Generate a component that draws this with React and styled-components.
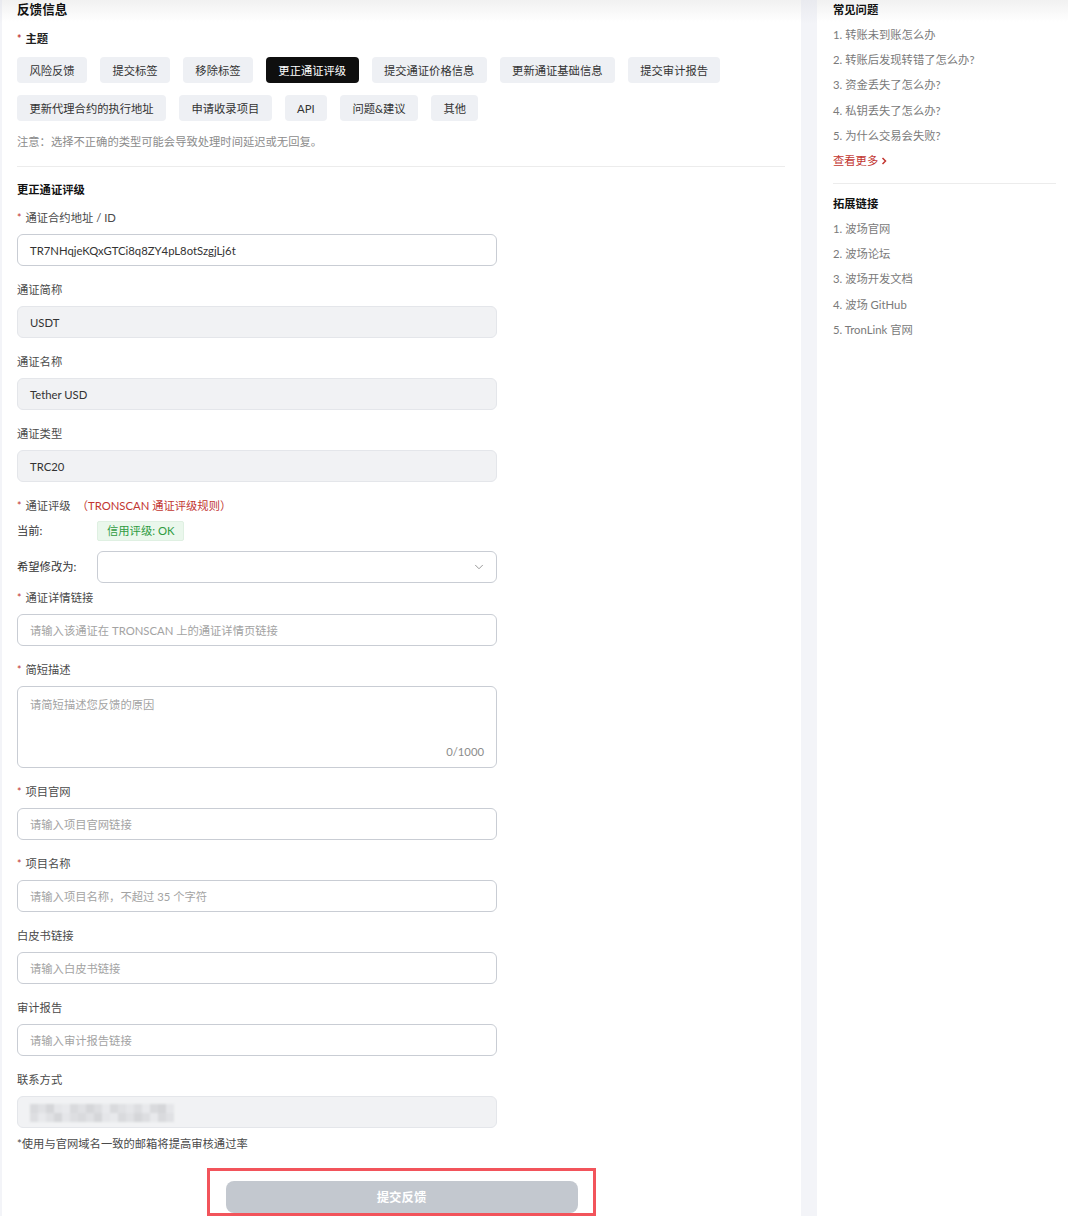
import React from 'react';
import styled, {createGlobalStyle} from 'styled-components';
import {ChevronDown} from 'lucide-react';

const GlobalStyle = createGlobalStyle`
  * { box-sizing: border-box; }
  body {
    margin: 0;
    background: #f3f4f8;
    font-family: "Lato", "Noto Sans CJK SC", sans-serif;
    font-size: 11.3px;
    color: #333;
    -webkit-font-smoothing: antialiased;
  }
`

const Page = styled.div`
  display: flex;
  gap: 16px;
  padding-left: 2px;
  min-height: 1216px;
  background: linear-gradient(#e9eaef 0, #f3f4f8 24px);
`

const Main = styled.main`
  width: 799px;
  padding: 0 16px 24px 15px;
  background: linear-gradient(#f1f1f1 0, #fff 22px);
`

const Side = styled.aside`
  flex: 1;
  padding: 0 12px 0 16px;
  background: linear-gradient(#f1f1f1 0, #fff 22px);
`

const Title = styled.h2`
  margin: 0;
  font-size: 12.6px;
  line-height: 20px;
  font-weight: 700;
  color: #111;
`

const SubTitle = styled(Title)`
  font-size: 11.3px;
  margin-top: ${p => p.$top || 0}px;
`

const Star = styled.span`
  color: #c23631;
  font-size: 10.5px;
  margin-right: 4px;
`

const Label = styled.div`
  line-height: 20px;
  color: ${p => p.$strong ? '#222' : '#4a4a4a'};
  font-weight: ${p => p.$strong ? 700 : 400};
  margin-top: ${p => p.$top || 0}px;
  margin-bottom: ${p => p.$bottom ?? 6}px;
`

const RuleLink = styled.span`
  color: #c23631;
  margin-left: 6px;
`

const Tags = styled.div`
  display: flex;
  flex-wrap: wrap;
  gap: 12px 13px;
  margin-top: 8px;
`

const Tag = styled.button`
  height: 26px;
  padding: 0 12.4px;
  border: 0;
  border-radius: 4px;
  font: inherit;
  color: ${p => p.$active ? '#fff' : '#333'};
  background: ${p => p.$active ? '#0f0f0f' : '#eef0f4'};
`

const Note = styled.p`
  margin: 11px 0 0;
  line-height: 20px;
  color: #8c8c8c;
`

const Divider = styled.hr`
  border: 0;
  border-top: 1px solid #ececec;
  margin: ${p => p.$margin || '14px 0 0'};
`

const Fields = styled.div`
  display: flex;
  flex-direction: column;
  gap: 14px;
  margin-top: 8px;
`

const Field = styled.div``

const Input = styled.div`
  width: 480px;
  height: 32px;
  padding: 0 12px;
  display: flex;
  align-items: center;
  border: 1px solid ${p => p.$disabled ? '#e4e6ea' : '#c9cdd4'};
  border-radius: 6px;
  background: ${p => p.$disabled ? '#f1f2f4' : '#fff'};
  color: ${p => p.$placeholder ? '#a3a3a3' : '#333'};
`

const TextArea = styled(Input)`
  height: 82px;
  align-items: flex-start;
  padding-top: 9px;
  position: relative;
`

const Counter = styled.span`
  position: absolute;
  right: 12px;
  bottom: 9px;
  color: #8c8c8c;
`

const Row = styled.div`
  display: flex;
  align-items: center;
  height: ${p => p.$height}px;
  line-height: 20px;
  margin-top: ${p => p.$top || 0}px;
  color: #333;
`

const RowLabel = styled.span`
  width: 80px;
  flex-shrink: 0;
`

const Badge = styled.span`
  height: 20px;
  padding: 0 9px;
  display: inline-flex;
  align-items: center;
  background: #eaf7ec;
  border: 1px solid #dff0e2;
  border-radius: 2px;
  color: #2e9b3f;
`

const Select = styled.div`
  width: 400px;
  height: 32px;
  border: 1px solid #c9cdd4;
  border-radius: 6px;
  display: flex;
  align-items: center;
  justify-content: flex-end;
  padding-right: 10px;
  color: #8a8a8a;
`

const Mosaic = styled.div`
  display: grid;
  grid-template-columns: repeat(18, 8px);
  grid-auto-rows: 9px;
  margin-top: 1px;
  filter: blur(0.8px);
`

const Cell = styled.span`
  background: ${p => p.$shade};
`

const Hint = styled.p`
  margin: 6px 0 0;
  line-height: 20px;
  color: #4a4a4a;
`

const SubmitFrame = styled.div`
  width: 389px;
  margin: 14px auto 0;
  padding: 10px 15px 0 16px;
  border: 3px solid #f2545b;
`

const Submit = styled.button`
  width: 100%;
  height: 32px;
  border: 0;
  border-radius: 8px;
  background: #c3c8cf;
  color: #fff;
  font: inherit;
  font-size: 12.4px;
  font-weight: 700;
`

const LinkList = styled.ol`
  list-style: none;
  margin: 5px 0 0;
  padding: 0;
  display: flex;
  flex-direction: column;
  gap: 5.2px;
`

const LinkItem = styled.li`
  line-height: 20px;
  color: ${p => p.$red ? '#c23631' : '#7a7a7a'};
  display: flex;
  align-items: center;
  gap: 2px;
`

const topics = [
  '风险反馈', '提交标签', '移除标签', '更正通证评级', '提交通证价格信息', '更新通证基础信息',
  '提交审计报告', '更新代理合约的执行地址', '申请收录项目', 'API', '问题&建议', '其他',
];

const faq = ['转账未到账怎么办', '转账后发现转错了怎么办?', '资金丢失了怎么办?', '私钥丢失了怎么办?', '为什么交易会失败?'];
const links = ['波场官网', '波场论坛', '波场开发文档', '波场 GitHub', 'TronLink 官网'];

// masked contact value, drawn as a soft grey mosaic
const shades = ['#d9dadd', '#e0e1e4', '#d5d6d9', '#e5e6e9', '#dddee1', '#e8e9ec'];

function Required({children}) {
  return <><Star>*</Star>{children}</>
}

function TextField({label, required, value, placeholder, disabled}) {
  return (
    <Field>
      <Label>{required ? <Required>{label}</Required> : label}</Label>
      <Input $disabled={disabled} $placeholder={!value}>{value || placeholder}</Input>
    </Field>
  )
}

export default function App() {
  return (
    <>
      <GlobalStyle/>
      <Page>
        <Main>
          <Title>反馈信息</Title>
          <Label $strong $top={9} $bottom={0}><Required>主题</Required></Label>
          <Tags>
            {topics.map(t => <Tag key={t} $active={t === '更正通证评级'}>{t}</Tag>)}
          </Tags>
          <Note>注意：选择不正确的类型可能会导致处理时间延迟或无回复。</Note>
          <Divider/>
          <SubTitle $top={13}>更正通证评级</SubTitle>
          <Fields>
            <TextField required label="通证合约地址 / ID" value="TR7NHqjeKQxGTCi8q8ZY4pL8otSzgjLj6t"/>
            <TextField disabled label="通证简称" value="USDT"/>
            <TextField disabled label="通证名称" value="Tether USD"/>
            <TextField disabled label="通证类型" value="TRC20"/>
            <Field>
              <Label $bottom={0}>
                <Required>通证评级</Required>
                <RuleLink>（TRONSCAN 通证评级规则）</RuleLink>
              </Label>
              <Row $top={5} $height={20}>
                <RowLabel>当前:</RowLabel>
                <Badge>信用评级: OK</Badge>
              </Row>
              <Row $top={10} $height={32}>
                <RowLabel>希望修改为:</RowLabel>
                <Select><ChevronDown size={14} strokeWidth={1.5}/></Select>
              </Row>
              <Label $top={5}><Required>通证详情链接</Required></Label>
              <Input $placeholder>请输入该通证在 TRONSCAN 上的通证详情页链接</Input>
            </Field>
            <Field>
              <Label><Required>简短描述</Required></Label>
              <TextArea $placeholder>
                请简短描述您反馈的原因
                <Counter>0/1000</Counter>
              </TextArea>
            </Field>
            <TextField required label="项目官网" placeholder="请输入项目官网链接"/>
            <TextField required label="项目名称" placeholder="请输入项目名称，不超过 35 个字符"/>
            <TextField label="白皮书链接" placeholder="请输入白皮书链接"/>
            <TextField label="审计报告" placeholder="请输入审计报告链接"/>
            <Field>
              <Label>联系方式</Label>
              <Input $disabled>
                <Mosaic>
                  {Array.from({length: 36}, (_, i) => (
                    <Cell key={i} $shade={shades[(i * 7 + (i >> 2)) % shades.length]}/>
                  ))}
                </Mosaic>
              </Input>
            </Field>
          </Fields>
          <Hint>*使用与官网域名一致的邮箱将提高审核通过率</Hint>
          <SubmitFrame>
            <Submit>提交反馈</Submit>
          </SubmitFrame>
        </Main>
        <Side>
          <SubTitle>常见问题</SubTitle>
          <LinkList>
            {faq.map((q, i) => <LinkItem key={q}>{i + 1}. {q}</LinkItem>)}
            <LinkItem $red>
              查看更多
              <svg width="8" height="10" viewBox="0 0 8 10">
                <path d="M2.5 2l3 3-3 3" fill="none" stroke="#c23631" strokeWidth="1.5"/>
              </svg>
            </LinkItem>
          </LinkList>
          <Divider $margin="12px 0 0"/>
          <SubTitle $top={10}>拓展链接</SubTitle>
          <LinkList>
            {links.map((q, i) => <LinkItem key={q}>{i + 1}. {q}</LinkItem>)}
          </LinkList>
        </Side>
      </Page>
    </>
  )
}
